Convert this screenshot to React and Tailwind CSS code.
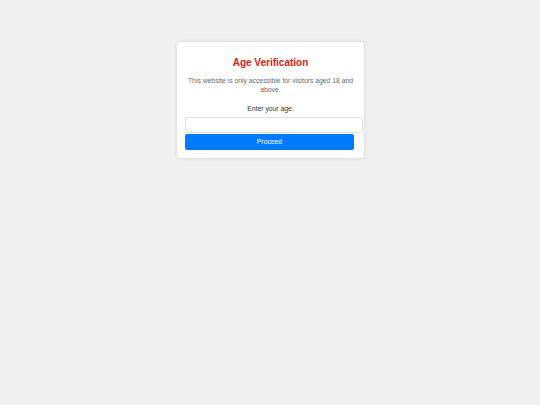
export default function App() {
  return (
    <div className="min-h-[405px] w-full bg-[#f0f0f0] font-['Liberation_Sans',Arial,sans-serif]">
      <div className="flex justify-center pt-[42px]">
        <div className="ml-[1px] w-[187px] rounded-[4px] bg-white px-[8px] pb-[8px] pt-[15px] text-center shadow-[0_0_4px_rgba(0,0,0,0.12)]">
          <h1 className="text-[10px] font-bold leading-[12px] text-[#e0191a]">Age Verification</h1>
          <p className="mt-[7px] text-[6.8px] leading-[9px] text-[#6b6b6b]">
            This website is only accessible for visitors aged 18 and above.
          </p>
          <p className="mt-[10px] text-[6.8px] leading-[9px] text-[#333]">Enter your age:</p>
          <input
            type="number"
            className="mt-[4px] block h-[16px] w-[178px] rounded-[2px] border border-[#e0e0e0] bg-white outline-none"
          />
          <button className="mt-[1px] block h-[16px] w-[169px] rounded-[2px] bg-[#007bff] text-[6.8px] text-white">
            Proceed
          </button>
        </div>
      </div>
    </div>
  );
}
